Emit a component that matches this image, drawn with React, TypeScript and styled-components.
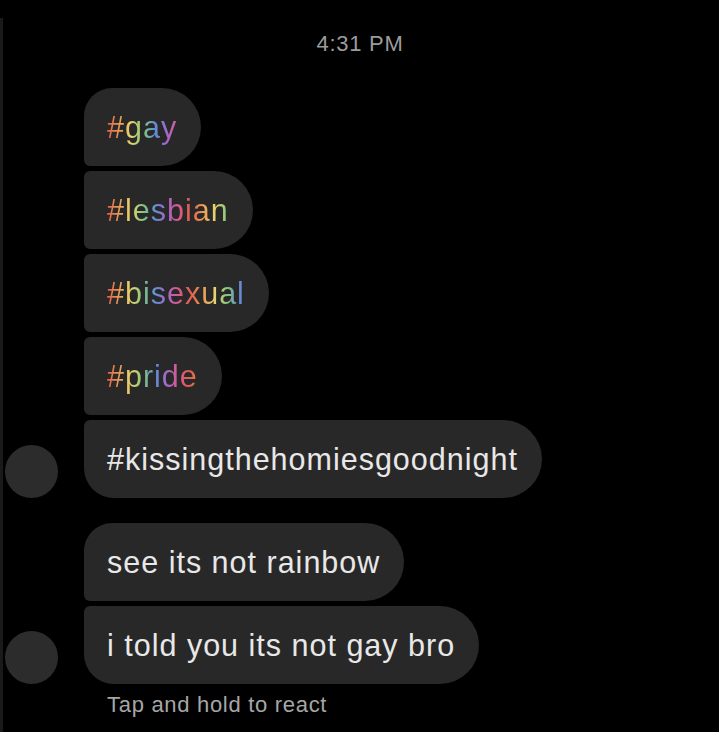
import React from "react";
import styled, { createGlobalStyle, css } from "styled-components";

const Global = createGlobalStyle`
  html, body {
    margin: 0;
    padding: 0;
    background: #000;
    width: 719px;
    height: 732px;
    overflow: hidden;
  }
  * { box-sizing: border-box; }
`;

const Screen = styled.div`
  width: 719px;
  height: 732px;
  background: #000;
  font-family: "Liberation Sans", Arial, sans-serif;
  display: flex;
  flex-direction: column;
  padding-top: 18px;
`;

const Frame = styled.div`
  flex: 1;
  display: flex;
  flex-direction: column;
  border-left: 3px solid #1a1a1a;
`;

const Time = styled.div`
  text-align: center;
  color: #9b9b9b;
  font-size: 22px;
  letter-spacing: 0.7px;
  line-height: 24px;
  margin-top: 14px;
  padding-right: 2px;
`;

const Thread = styled.div`
  display: flex;
  flex-direction: column;
  margin-top: 32px;
`;

const Group = styled.div<{ $gap?: number }>`
  display: flex;
  flex-direction: column;
  gap: 5px;
  margin-bottom: ${(p) => p.$gap ?? 0}px;
`;

const Row = styled.div`
  display: flex;
  align-items: flex-end;
`;

const AvatarSlot = styled.div`
  width: 81px;
  flex: none;
  display: flex;
  align-items: flex-end;
  padding-left: 2px;
`;

const Avatar = styled.div`
  width: 53px;
  height: 53px;
  border-radius: 50%;
  background: #2c2c2c;
`;

type Pos = "first" | "middle" | "last";

const Bubble = styled.div<{ $pos: Pos }>`
  height: 78px;
  display: flex;
  align-items: center;
  padding: 0 24px 0 23px;
  background: #282828;
  border-radius: 39px;
  font-size: 30.5px;
  letter-spacing: 1px;
  color: #e8e8e8;
  white-space: nowrap;
  ${(p) =>
    p.$pos === "first" &&
    css`
      border-top-left-radius: 28px;
      border-bottom-left-radius: 6px;
    `}
  ${(p) =>
    p.$pos === "middle" &&
    css`
      border-top-left-radius: 6px;
      border-bottom-left-radius: 6px;
    `}
  ${(p) =>
    p.$pos === "last" &&
    css`
      border-top-left-radius: 6px;
      border-bottom-left-radius: 30px;
    `}
`;

const Rainbow = styled.span`
  background-image: repeating-linear-gradient(
    90deg,
    #e0604c 0px,
    #eb9a55 12px,
    #e6d470 24px,
    #86c67a 36px,
    #5f8fd6 48px,
    #a667c9 60px,
    #d95a8a 72px,
    #e0604c 84px
  );
  -webkit-background-clip: text;
  background-clip: text;
  color: transparent;
`;

const Hint = styled.div`
  color: #a6a6a6;
  font-size: 22px;
  letter-spacing: 0.7px;
  padding-left: 104px;
  margin-top: 8px;
`;

const tags: { text: string; pos: Pos }[] = [
  { text: "#gay", pos: "first" },
  { text: "#lesbian", pos: "middle" },
  { text: "#bisexual", pos: "middle" },
  { text: "#pride", pos: "middle" },
];

export default function App() {
  return (
    <>
      <Global />
      <Screen>
        <Frame>
          <Time>4:31 PM</Time>
          <Thread>
            <Group $gap={25}>
              {tags.map((t) => (
                <Row key={t.text}>
                  <AvatarSlot />
                  <Bubble $pos={t.pos}>
                    <Rainbow>{t.text}</Rainbow>
                  </Bubble>
                </Row>
              ))}
              <Row>
                <AvatarSlot>
                  <Avatar />
                </AvatarSlot>
                <Bubble $pos="last">#kissingthehomiesgoodnight</Bubble>
              </Row>
            </Group>
            <Group>
              <Row>
                <AvatarSlot />
                <Bubble $pos="first">see its not rainbow</Bubble>
              </Row>
              <Row>
                <AvatarSlot>
                  <Avatar />
                </AvatarSlot>
                <Bubble $pos="last">i told you its not gay bro</Bubble>
              </Row>
            </Group>
            <Hint>Tap and hold to react</Hint>
          </Thread>
        </Frame>
      </Screen>
    </>
  );
}
